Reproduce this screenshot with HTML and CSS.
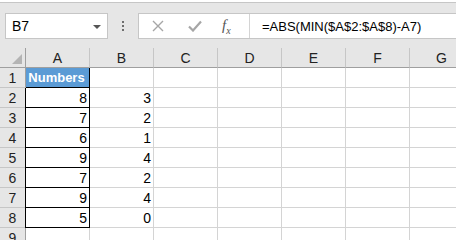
FILE: index.html
```html
<!DOCTYPE html>
<html lang="en">
  <head>
    <meta charset="UTF-8" />
    <title>Sheet</title>
    <link rel="stylesheet" href="styles.css">
  </head>
  <body>
    <!-- Formula bar -->
    <div class="formula-bar">
      <div class="name-box">
        <span>B7</span>
        <span class="drop"></span>
      </div>
      <div class="grip"><i></i><i></i><i></i></div>
      <div class="formula-box">
        <div class="buttons">
          <svg class="icon" width="12" height="12" viewBox="0 0 12 12">
            <path d="M1 1L11 11M11 1L1 11" stroke="#a6a6a6" stroke-width="1.4" fill="none" />
          </svg>
          <svg class="icon" width="14" height="12" viewBox="0 0 14 12">
            <path d="M1 6.5L5 10.5L13 1.5" stroke="#a6a6a6" stroke-width="2.2" fill="none" />
          </svg>
          <span class="fx"><i>f</i><sub>x</sub></span>
        </div>
        <div class="formula">=ABS(MIN($A$2:$A$8)-A7)</div>
      </div>
    </div>

    <!-- Grid -->
    <div class="sheet">
      <div class="hd corner"><span class="tri"></span></div>
      <div class="hd">A</div>
      <div class="hd">B</div>
      <div class="hd">C</div>
      <div class="hd">D</div>
      <div class="hd">E</div>
      <div class="hd">F</div>
      <div class="hd">G</div>

      <div class="rh">1</div>
      <div class="cell title">Numbers</div>
      <div class="cell"></div><div class="cell"></div><div class="cell"></div><div class="cell"></div><div class="cell"></div><div class="cell"></div>

      <div class="rh">2</div>
      <div class="cell box">8</div><div class="cell num">3</div>
      <div class="cell"></div><div class="cell"></div><div class="cell"></div><div class="cell"></div><div class="cell"></div>

      <div class="rh">3</div>
      <div class="cell box">7</div><div class="cell num">2</div>
      <div class="cell"></div><div class="cell"></div><div class="cell"></div><div class="cell"></div><div class="cell"></div>

      <div class="rh">4</div>
      <div class="cell box">6</div><div class="cell num">1</div>
      <div class="cell"></div><div class="cell"></div><div class="cell"></div><div class="cell"></div><div class="cell"></div>

      <div class="rh">5</div>
      <div class="cell box">9</div><div class="cell num">4</div>
      <div class="cell"></div><div class="cell"></div><div class="cell"></div><div class="cell"></div><div class="cell"></div>

      <div class="rh">6</div>
      <div class="cell box">7</div><div class="cell num">2</div>
      <div class="cell"></div><div class="cell"></div><div class="cell"></div><div class="cell"></div><div class="cell"></div>

      <div class="rh">7</div>
      <div class="cell box">9</div><div class="cell num">4</div>
      <div class="cell"></div><div class="cell"></div><div class="cell"></div><div class="cell"></div><div class="cell"></div>

      <div class="rh">8</div>
      <div class="cell box">5</div><div class="cell num">0</div>
      <div class="cell"></div><div class="cell"></div><div class="cell"></div><div class="cell"></div><div class="cell"></div>

      <div class="rh">9</div>
      <div class="cell"></div><div class="cell"></div><div class="cell"></div><div class="cell"></div><div class="cell"></div><div class="cell"></div><div class="cell"></div>
    </div>
  </body>
</html>
```

FILE: styles.css
```css
/* Page */
body {
  margin: 0;
  width: 456px;
  height: 240px;
  overflow: hidden;
  background: #fff;
  font-family: "Liberation Sans", Arial, sans-serif;
  color: #000;
}

/* Formula bar */
.formula-bar {
  height: 46px;
  background: #e6e6e6;
  border-top: 1px solid #c6c6c6;
  margin-top: 2px;
  display: flex;
  align-items: flex-start;
  padding: 10px 0 0 5px;
  box-sizing: border-box;
}

.name-box {
  width: 103px;
  height: 26px;
  box-sizing: border-box;
  background: #fff;
  border: 1px solid #c6c6c6;
  display: flex;
  align-items: center;
  justify-content: space-between;
  padding: 0 6px 0 6px;
  font-size: 14px;
}

.drop {
  width: 0;
  height: 0;
  border-left: 4px solid transparent;
  border-right: 4px solid transparent;
  border-top: 4px solid #555;
  margin-top: 1px;
}

.grip {
  width: 30px;
  height: 26px;
  display: flex;
  flex-direction: column;
  align-items: center;
  justify-content: center;
  gap: 2px;
}

.grip i {
  width: 2px;
  height: 2px;
  background: #6e6e6e;
}

.formula-box {
  flex: 1;
  height: 26px;
  box-sizing: border-box;
  background: #fff;
  border: 1px solid #c6c6c6;
  border-right: none;
  display: flex;
  align-items: center;
}

.buttons {
  width: 111px;
  height: 100%;
  border-right: 1px solid #d4d4d4;
  display: flex;
  align-items: center;
  padding-left: 13px;
  box-sizing: border-box;
}

.icon {
  margin-right: 24px;
}

.buttons .icon:nth-child(2) {
  margin-right: 20px;
}

.fx {
  font-family: "Liberation Serif", serif;
  font-size: 15px;
  color: #555;
}

.fx sub {
  font-size: 10px;
  font-style: italic;
}

.formula {
  padding-left: 12px;
  font-size: 13px;
}

/* Grid */
.sheet {
  display: grid;
  grid-template-columns: 26px repeat(7, 64px);
  grid-auto-rows: 20px;
  font-size: 14px;
}

.hd {
  background: #e6e6e6;
  border-right: 1px solid #c6c6c6;
  border-bottom: 1px solid #9f9f9f;
  display: flex;
  align-items: center;
  justify-content: center;
  color: #222;
  box-sizing: border-box;
}

.corner {
  position: relative;
  border-right-color: #9f9f9f;
}

.tri {
  position: absolute;
  right: 3px;
  bottom: 3px;
  width: 0;
  height: 0;
  border-left: 10px solid transparent;
  border-bottom: 10px solid #b4b4b4;
}

.rh {
  background: #e6e6e6;
  border-right: 1px solid #9f9f9f;
  border-bottom: 1px solid #c6c6c6;
  display: flex;
  align-items: center;
  justify-content: center;
  color: #222;
  box-sizing: border-box;
}

.cell {
  border-right: 1px solid #d4d4d4;
  border-bottom: 1px solid #d4d4d4;
  box-sizing: border-box;
  display: flex;
  align-items: center;
  justify-content: flex-end;
  padding-right: 2px;
}

.title {
  background: #5b9bd5;
  color: #fff;
  font-weight: bold;
  justify-content: center;
  font-size: 13px;
  border-right-color: #000;
  border-bottom-color: #000;
}

.box {
  border-right-color: #000;
  border-bottom-color: #000;
  box-shadow: -1px 0 0 #000;
}
```
